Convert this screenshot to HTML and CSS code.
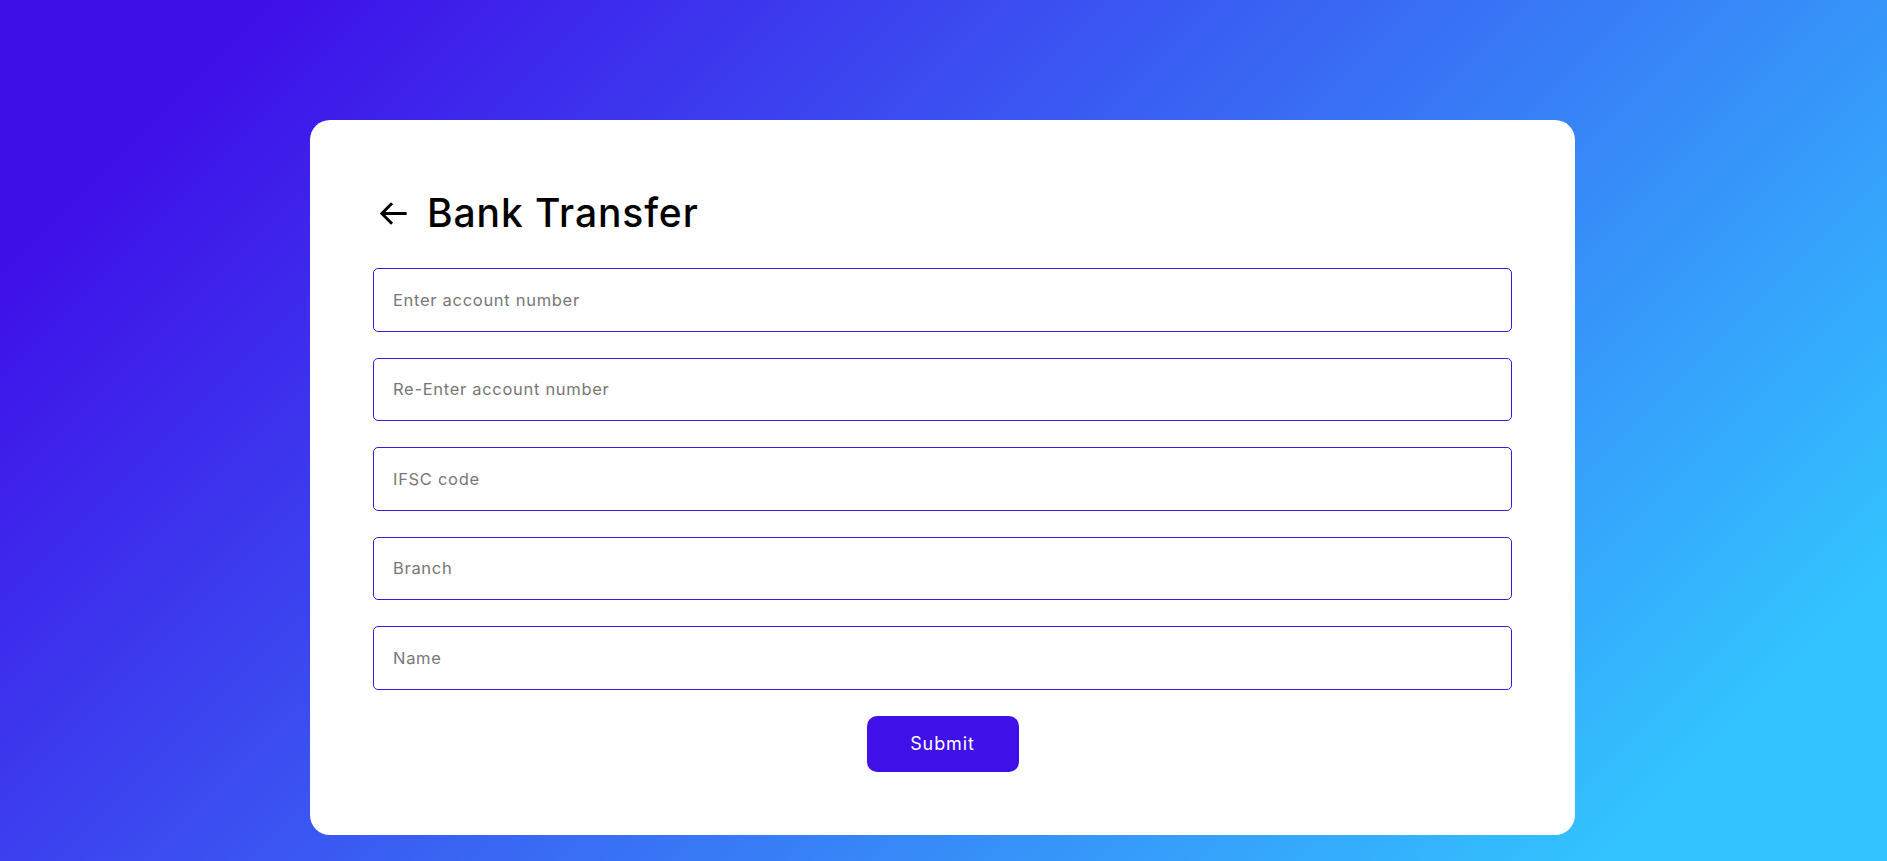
FILE: index.html
```html
<!DOCTYPE html>
<html lang="en">
<head>
<meta charset="utf-8">
<title>Bank Transfer</title>
<link rel="stylesheet" href="styles.css">
</head>
<body>
<main class="page">
  <section class="card">
    <header class="card-header">
      <button class="back" type="button" aria-label="Back">
        <svg class="back-icon" viewBox="0 0 24 24" width="35" height="35" aria-hidden="true">
          <path d="M21 11H6.414l5.293-5.293-1.414-1.414L2.586 12l7.707 7.707 1.414-1.414L6.414 13H21z" fill="#000"/>
        </svg>
      </button>
      <h1 class="title">Bank Transfer</h1>
    </header>
    <form class="form">
      <input class="field" type="text" placeholder="Enter account number">
      <input class="field" type="text" placeholder="Re-Enter account number">
      <input class="field" type="text" placeholder="IFSC code">
      <input class="field" type="text" placeholder="Branch">
      <input class="field" type="text" placeholder="Name">
      <button class="submit" type="button">Submit</button>
    </form>
  </section>
</main>
</body>
</html>
```

FILE: styles.css
```css
* { box-sizing: border-box; }

html, body {
  margin: 0;
  padding: 0;
}

body {
  min-height: 100vh;
  font-family: Inter, "Open Sans", "Liberation Sans", sans-serif;
  background: linear-gradient(135deg, #3f0fe9 10%, #33c4ff 90%);
  overflow: hidden;
}

.page {
  min-height: 100vh;
  padding: 120px 2px 0 0;
}

.card {
  width: 1265px;
  margin: 0 auto;
  background: #fff;
  border-radius: 20px;
  padding: 63px;
}

.card-header {
  display: flex;
  align-items: center;
  height: 85px;
  padding: 0 0 24px 3px;
  gap: 16px;
}

.back {
  border: 0;
  background: none;
  padding: 0;
  margin: 0;
  width: 35px;
  height: 35px;
  display: flex;
  cursor: pointer;
}

.back-icon {
  display: block;
}

.title {
  margin: 0;
  font-size: 39px;
  font-weight: 500;
  color: #000;
  letter-spacing: 0.9px;
  line-height: 1.2;
}

.form {
  display: flex;
  flex-direction: column;
  align-items: center;
  gap: 26px;
}

.field {
  width: 100%;
  height: 63.5px;
  border: 1px solid #4512e8;
  border-radius: 5px;
  padding: 0 19px;
  font-family: inherit;
  font-size: 16.5px;
  letter-spacing: 0.7px;
  color: #222;
  background: #fff;
  outline: none;
}

.field::placeholder {
  color: #777;
}

.submit {
  width: 152px;
  height: 56px;
  border: 0;
  border-radius: 10px;
  background: #4010e9;
  color: #fff;
  font-family: inherit;
  font-size: 18px;
  letter-spacing: 0.9px;
  cursor: pointer;
}
```
